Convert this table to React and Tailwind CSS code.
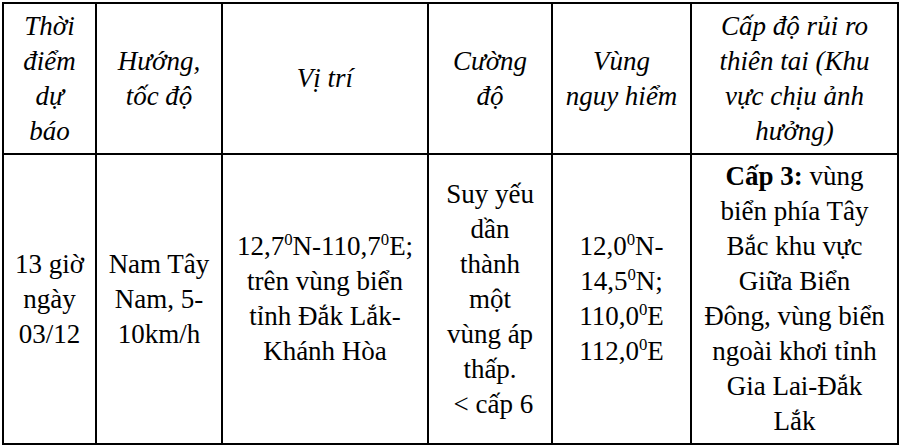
import React from "react";

// Degree-like superscript used in coordinates
function Deg() {
  return <sup className="text-[0.62em] top-[-0.6em]">0</sup>;
}

const headers = [
  ["Thời", "điểm", "dự", "báo"],
  ["Hướng,", "tốc độ"],
  ["Vị trí"],
  ["Cường", "độ"],
  ["Vùng", "nguy hiểm"],
  ["Cấp độ rủi ro", "thiên tai (Khu", "vực chịu ảnh", "hưởng)"],
];

const widths = ["w-[93px]", "w-[126px]", "w-[206px]", "w-[124px]", "w-[139px]", "w-[207px]"];

function Lines({ lines }) {
  return lines.map((l, i) => (
    <div key={i} className="whitespace-nowrap">
      {l}
    </div>
  ));
}

export default function App() {
  const body = [
    ["13 giờ", "ngày", "03/12"],
    ["Nam Tây", "Nam, 5-", "10km/h"],
    [
      <>12,7<Deg />N-110,7<Deg />E;</>,
      "trên vùng biển",
      "tỉnh Đắk Lắk-",
      "Khánh Hòa",
    ],
    ["Suy yếu", "dần", "thành", "một", "vùng áp", "thấp.", <>&nbsp;&lt; cấp 6</>],
    [
      <>12,0<Deg />N-</>,
      <>14,5<Deg />N;</>,
      <>110,0<Deg />E</>,
      <>112,0<Deg />E</>,
    ],
    [
      <><span className="font-bold">Cấp 3:</span> vùng</>,
      "biển phía Tây",
      "Bắc khu vực",
      "Giữa Biển",
      "Đông, vùng biển",
      "ngoài khơi tỉnh",
      "Gia Lai-Đắk",
      "Lắk",
    ],
  ];

  return (
    <div className="w-[907px] h-[446px] bg-white overflow-hidden pl-[2px] pt-[2px]">
      <table
        className="border-collapse text-black text-[27px] leading-[35px] table-fixed"
        style={{ fontFamily: '"Liberation Serif", "Times New Roman", serif' }}
      >
        <tbody>
          <tr className="h-[151px]">
            {headers.map((h, i) => (
              <td
                key={i}
                className={`${widths[i]} border-2 border-black text-center align-middle italic p-0`}
              >
                <Lines lines={h} />
              </td>
            ))}
          </tr>
          <tr className="h-[290px]">
            {body.map((b, i) => (
              <td
                key={i}
                className={`${widths[i]} border-2 border-black text-center align-middle p-0`}
              >
                <Lines lines={b} />
              </td>
            ))}
          </tr>
        </tbody>
      </table>
    </div>
  );
}
